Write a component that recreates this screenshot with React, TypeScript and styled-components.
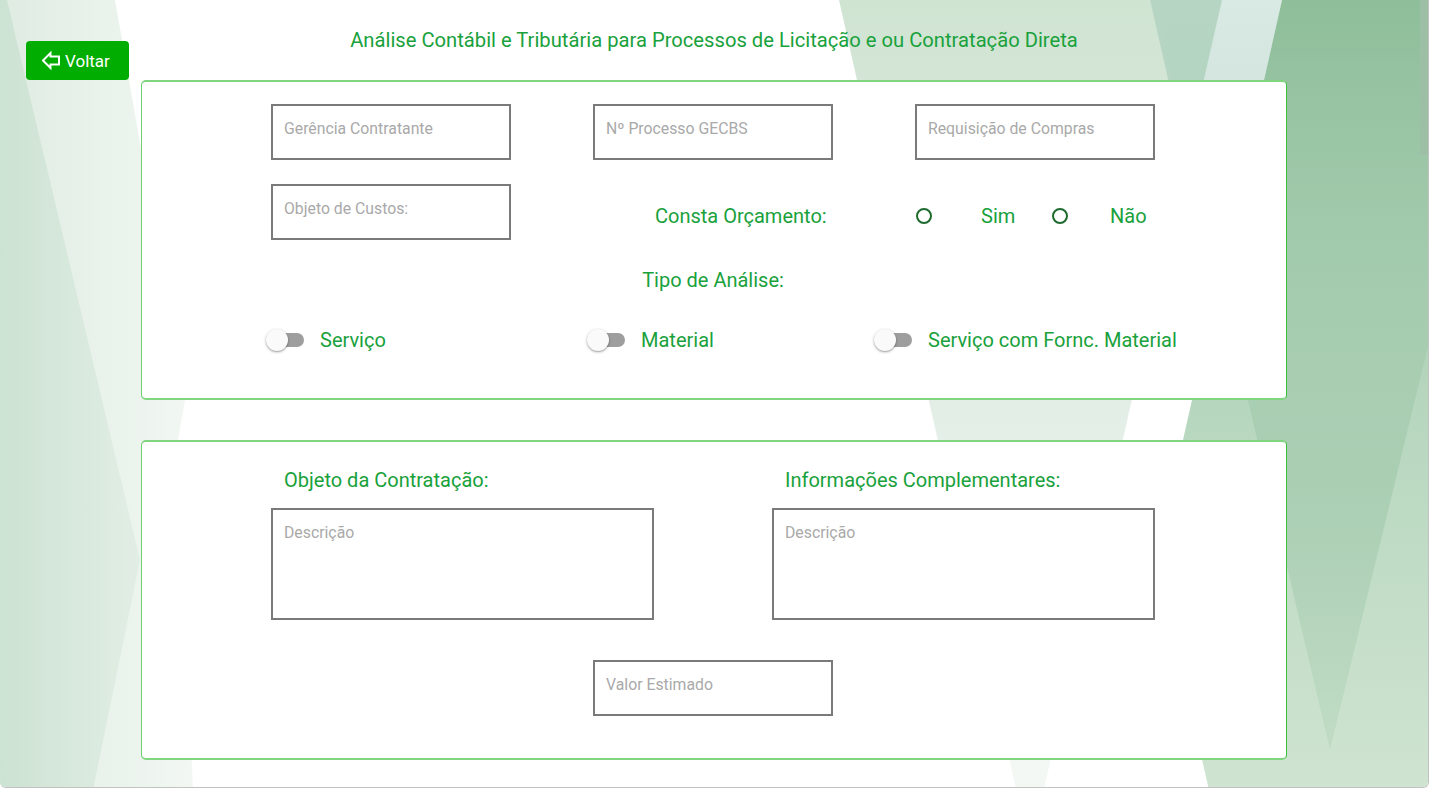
import React from "react";
import styled, { createGlobalStyle } from "styled-components";

const GREEN = "#19a13c";

const GlobalStyle = createGlobalStyle`
  html, body { margin: 0; padding: 0; background: #fff; }
  body { font-family: Roboto, "Noto Sans", Arial, sans-serif; }
  * { box-sizing: border-box; }
`;

const Page = styled.div`
  position: relative;
  width: 1429px;
  height: 788px;
  border-right: 1px solid #c2c2c2;
  border-bottom: 1px solid #c2c2c2;
  border-radius: 0 0 6px 6px;
  overflow: hidden;
  background: #fff;
`;

const BackdropSvg = styled.svg`
  position: absolute;
  left: 0;
  top: 0;
  width: 1430px;
  height: 790px;
  z-index: 0;
`;

const Content = styled.div`
  position: relative;
  z-index: 1;
  display: flex;
  flex-direction: column;
  align-items: center;
`;

const TopBar = styled.header`
  width: 100%;
  height: 80px;
  display: grid;
  grid-template-columns: 141px 1fr 141px;
`;

const BackButton = styled.button`
  align-self: end;
  margin-left: 26px;
  width: 103px;
  height: 39px;
  display: flex;
  align-items: center;
  gap: 5px;
  padding: 0 0 0 16px;
  border: none;
  border-radius: 4px;
  background: #00ad00;
  color: #fff;
  font-family: Roboto, Arial, sans-serif;
  font-size: 17px;
  cursor: pointer;
`;

const Title = styled.h1`
  margin: 28px 0 0;
  font-size: 20.2px;
  line-height: 24px;
  font-weight: 400;
  color: ${GREEN};
  text-align: center;
`;

const Card = styled.section<{ $gapTop?: number; $padTop: number }>`
  width: 1146px;
  height: 320px;
  margin-top: ${(p) => p.$gapTop ?? 0}px;
  padding-top: ${(p) => p.$padTop}px;
  padding-right: 2px;
  background: #fff;
  border-style: solid;
  border-width: 2px 1px;
  border-color: #7fd67f #3cbf3c #7fd67f #6fd06f;
  border-radius: 5px;
  display: flex;
  flex-direction: column;
`;

const FieldGrid = styled.div<{ $cols: string; $gap: number; $top?: number }>`
  display: grid;
  grid-template-columns: ${(p) => p.$cols};
  column-gap: ${(p) => p.$gap}px;
  justify-content: center;
  margin-top: ${(p) => p.$top ?? 0}px;
`;

const TextInput = styled.input`
  width: 240px;
  height: 56px;
  border: 2px solid #7a7a7a;
  border-radius: 0;
  padding: 0 11px 8px;
  font-family: Roboto, Arial, sans-serif;
  font-size: 15.8px;
  color: #333;
  background: #fff;
  outline: none;
  &::placeholder { color: #a9a9a9; }
`;

const TextArea = styled.textarea`
  width: 383px;
  height: 112px;
  border: 2px solid #7a7a7a;
  border-radius: 0;
  padding: 13px 11px;
  font-family: Roboto, Arial, sans-serif;
  font-size: 15.8px;
  color: #333;
  resize: none;
  outline: none;
  &::placeholder { color: #a9a9a9; }
`;

const BudgetRow = styled.div`
  display: grid;
  grid-template-columns: 261px 65px 71px 58px auto;
  align-items: center;
  padding: 8px 0 0 62px;
  height: 56px;
`;

const GreenText = styled.span<{ $size?: number }>`
  font-size: ${(p) => p.$size ?? 20}px;
  line-height: 24px;
  color: ${GREEN};
  white-space: nowrap;
`;

const Radio = styled.span`
  display: block;
  width: 16px;
  height: 16px;
  border: 2px solid #1d6a2d;
  border-radius: 50%;
`;

const SectionLabel = styled.div`
  margin-top: 28px;
  text-align: center;
  font-size: 20px;
  line-height: 24px;
  color: ${GREEN};
`;

const ToggleRow = styled.div`
  display: grid;
  grid-template-columns: 321px 287px auto;
  align-items: center;
  height: 24px;
  margin-top: 36px;
  padding-left: 125px;
`;

const ToggleItem = styled.label`
  display: flex;
  align-items: center;
  gap: 16px;
`;

const Switch = styled.span`
  position: relative;
  display: block;
  width: 34px;
  height: 14px;
  margin-left: 3px;
  border-radius: 7px;
  background: #9e9e9e;
  &::before {
    content: "";
    position: absolute;
    left: -4px;
    top: -4px;
    width: 22px;
    height: 22px;
    border-radius: 50%;
    background: #fafafa;
    box-shadow: 0 1px 3px rgba(0, 0, 0, 0.3), 0 1px 1px rgba(0, 0, 0, 0.14);
  }
`;

const Heading = styled.div`
  padding-left: 13px;
  font-size: 20px;
  line-height: 24px;
  color: ${GREEN};
`;

const CenterField = styled.div<{ $top: number }>`
  display: flex;
  justify-content: center;
  margin-top: ${(p) => p.$top}px;
`;

const ArrowIcon = () => (
  <svg width="18" height="19" viewBox="0 0 18 19">
    <path
      d="M1 9.5 L8.5 2 V5.5 H17 V13.5 H8.5 V17 Z"
      fill="none"
      stroke="#fff"
      strokeWidth="2"
      strokeLinejoin="miter"
    />
  </svg>
);

const Backdrop = () => (
  <BackdropSvg viewBox="0 0 1430 790" preserveAspectRatio="none">
    <defs>
      <linearGradient id="lightL" x1="0" y1="0" x2="1" y2="0">
        <stop offset="0" stopColor="#dfece2" />
        <stop offset="1" stopColor="#f2f7f3" />
      </linearGradient>
      <linearGradient id="darkL" x1="0" y1="0" x2="1" y2="0">
        <stop offset="0" stopColor="#cce2d3" />
        <stop offset="1" stopColor="#e2eee5" />
      </linearGradient>
      <linearGradient id="paleV" gradientUnits="userSpaceOnUse" x1="0" y1="0" x2="0" y2="790">
        <stop offset="0" stopColor="#d0e4d2" />
        <stop offset="0.55" stopColor="#e4efe7" />
        <stop offset="1" stopColor="#f4f8f5" />
      </linearGradient>
      <linearGradient id="greenR" gradientUnits="userSpaceOnUse" x1="0" y1="0" x2="0" y2="790">
        <stop offset="0" stopColor="#8ebe9a" />
        <stop offset="0.5" stopColor="#b6d6be" />
        <stop offset="1" stopColor="#cfe4d1" />
      </linearGradient>
      <linearGradient id="vShade" gradientUnits="userSpaceOnUse" x1="0" y1="0" x2="0" y2="790">
        <stop offset="0" stopColor="#8ebe9a" stopOpacity="0" />
        <stop offset="0.6" stopColor="#8ebe9a" stopOpacity="0.4" />
        <stop offset="1" stopColor="#8ebe9a" stopOpacity="0.15" />
      </linearGradient>
    </defs>
    <polygon points="0,0 115,0 185,400 178,440 193,790 0,790" fill="url(#lightL)" />
    <polygon points="0,0 7,0 140,560 93,790 0,790" fill="url(#darkL)" />
    <polygon points="839,0 1222,0 1030,851" fill="url(#paleV)" />
    <polygon points="1150,0 1282,0 1217,290" fill="#d9e9e4" />
    <polygon points="1150,0 1222,0 1186,158" fill="#b6d6c3" />
    <polygon points="1282,0 1430,0 1430,790 1209,790 1156,560" fill="url(#greenR)" />
    <polygon points="1154,0 1512,0 1330,750" fill="url(#vShade)" />
    <rect x="1420" y="0" width="10" height="155" fill="#9cbfa6" />
  </BackdropSvg>
);

export default function App() {
  return (
    <>
      <GlobalStyle />
      <Page>
        <Backdrop />
        <Content>
          <TopBar>
            <BackButton type="button">
              <ArrowIcon />
              Voltar
            </BackButton>
            <Title>Análise Contábil e Tributária para Processos de Licitação e ou Contratação Direta</Title>
          </TopBar>

          <Card $padTop={22}>
            <FieldGrid $cols="repeat(3, 240px)" $gap={82}>
              <TextInput placeholder="Gerência Contratante" />
              <TextInput placeholder="Nº Processo GECBS" />
              <TextInput placeholder="Requisição de Compras" />
            </FieldGrid>
            <FieldGrid $cols="240px 562px" $gap={82} $top={24}>
              <TextInput placeholder="Objeto de Custos:" />
              <BudgetRow>
                <GreenText>Consta Orçamento:</GreenText>
                <Radio />
                <GreenText>Sim</GreenText>
                <Radio />
                <GreenText>Não</GreenText>
              </BudgetRow>
            </FieldGrid>
            <SectionLabel>Tipo de Análise:</SectionLabel>
            <ToggleRow>
              <ToggleItem>
                <Switch />
                <GreenText>Serviço</GreenText>
              </ToggleItem>
              <ToggleItem>
                <Switch />
                <GreenText>Material</GreenText>
              </ToggleItem>
              <ToggleItem>
                <Switch />
                <GreenText>Serviço com Fornc. Material</GreenText>
              </ToggleItem>
            </ToggleRow>
          </Card>

          <Card $gapTop={40} $padTop={26}>
            <FieldGrid $cols="repeat(2, 383px)" $gap={118}>
              <Heading>Objeto da Contratação:</Heading>
              <Heading>Informações Complementares:</Heading>
            </FieldGrid>
            <FieldGrid $cols="repeat(2, 383px)" $gap={118} $top={16}>
              <TextArea placeholder="Descrição" />
              <TextArea placeholder="Descrição" />
            </FieldGrid>
            <CenterField $top={40}>
              <TextInput placeholder="Valor Estimado" />
            </CenterField>
          </Card>
        </Content>
      </Page>
    </>
  );
}
